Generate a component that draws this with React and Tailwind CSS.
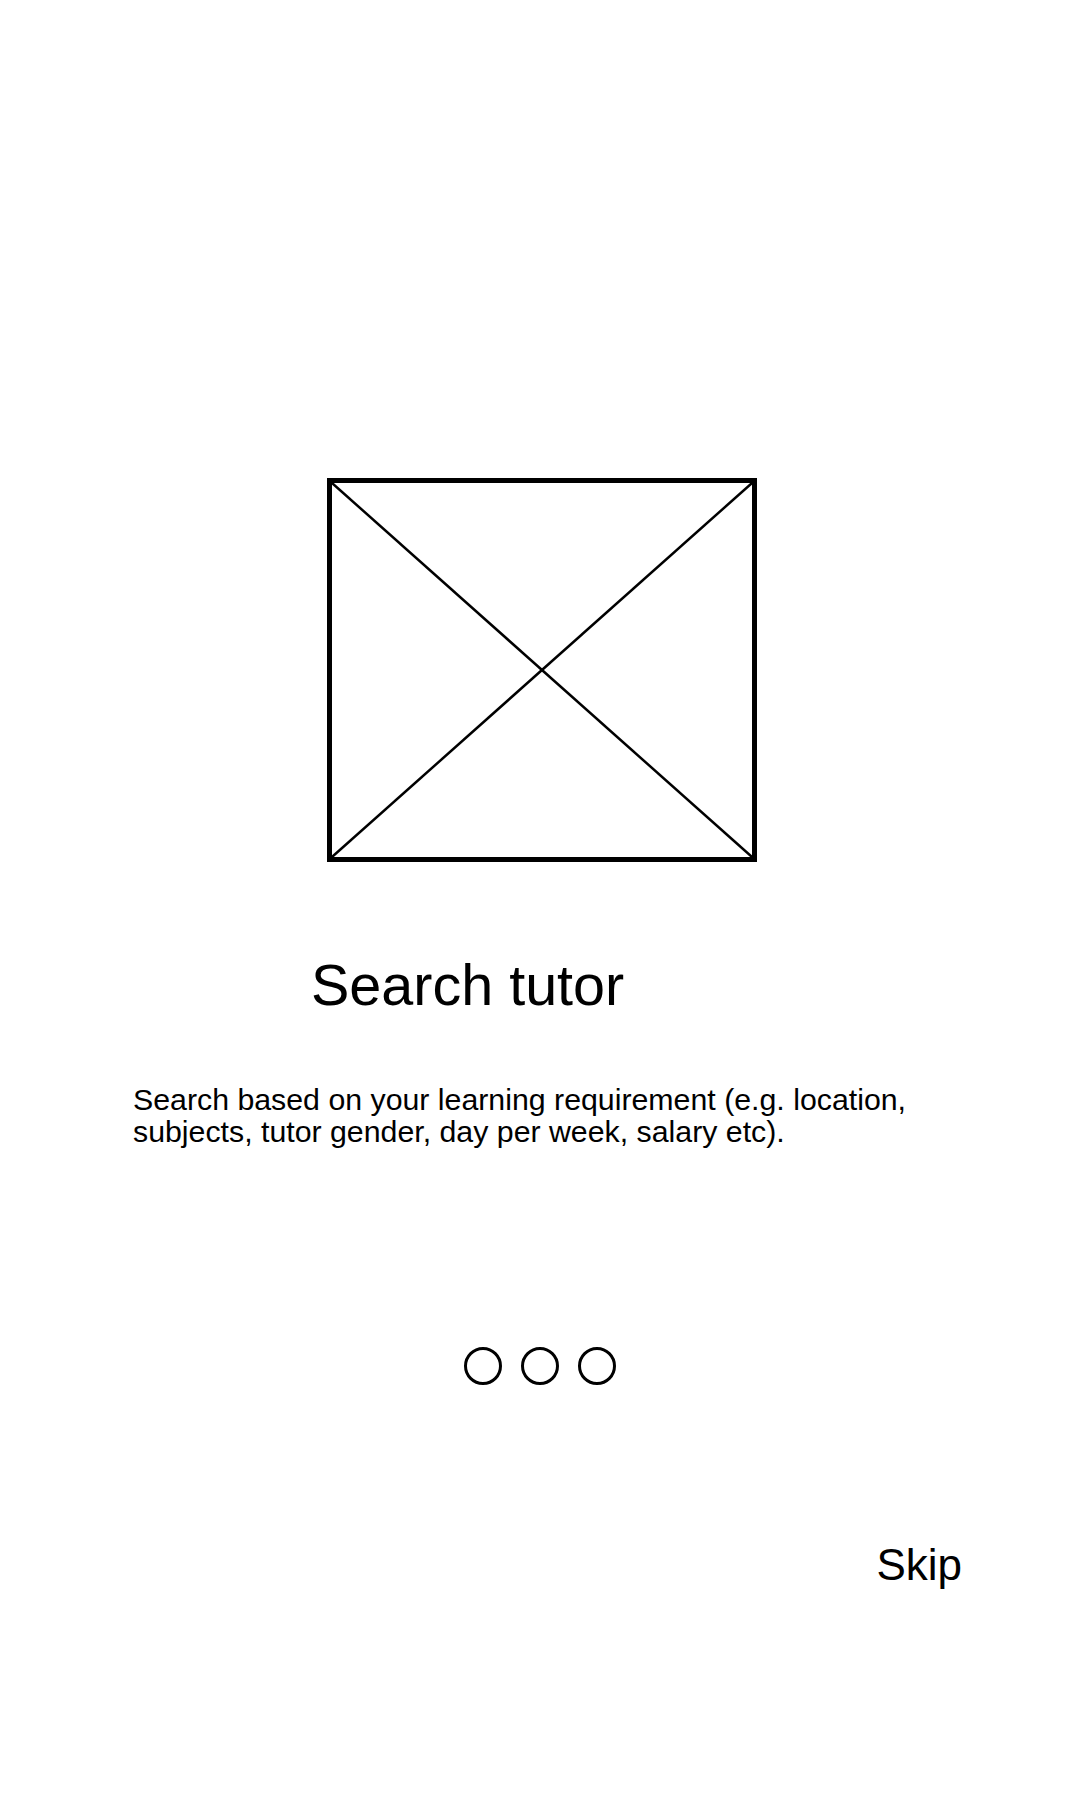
import React from "react";

const font = { fontFamily: '"Liberation Sans", Arial, sans-serif' };

const Placeholder = () => (
  <div className="relative w-[430px] h-[384px] border-[5px] border-black">
    <svg className="absolute inset-0 w-full h-full" viewBox="0 0 420 374" preserveAspectRatio="none">
      <line x1="0" y1="0" x2="420" y2="374" stroke="black" strokeWidth="2.5" />
      <line x1="420" y1="0" x2="0" y2="374" stroke="black" strokeWidth="2.5" />
    </svg>
  </div>
);

export default function App() {
  return (
    <div className="w-[1080px] h-[1800px] bg-white text-black flex flex-col" style={font}>
      <div className="pt-[478px] pl-[327px]">
        <Placeholder />
      </div>

      <h1 className="mt-[95px] ml-[311px] text-[57.5px] leading-none font-normal">Search tutor</h1>

      <p className="mt-[69px] ml-[133px] w-[810px] text-[30.3px] leading-[32px]">
        Search based on your learning requirement (e.g. location, subjects, tutor gender, day per week, salary etc).
      </p>

      {/* pager dots */}
      <div className="mt-[199px] flex justify-center gap-[19px]">
        <span className="w-[38px] h-[38px] rounded-full border-[3px] border-black" />
        <span className="w-[38px] h-[38px] rounded-full border-[3px] border-black" />
        <span className="w-[38px] h-[38px] rounded-full border-[3px] border-black" />
      </div>

      <div className="mt-[158px] flex justify-end pr-[118px]">
        <button type="button" className="text-[44px] leading-none">Skip</button>
      </div>
    </div>
  );
}
